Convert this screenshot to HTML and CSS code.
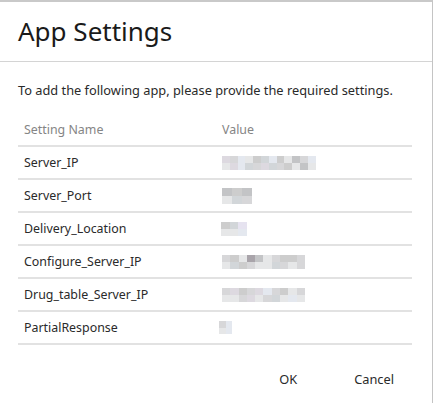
FILE: index.html
```html
<!DOCTYPE html>
<html>
<head>
<meta charset="utf-8">
<link rel="stylesheet" href="styles.css">
</head>
<body>
<div class="dialog">
  <div class="header"><h1 class="title">App Settings</h1></div>
  <div class="content">
    <p class="desc">To add the following app, please provide the required settings.</p>
    <div class="table">
      <div class="row head"><div class="name">Setting Name</div><div class="value">Value</div></div>
      <div class="row"><div class="name">Server_IP</div><div class="value">
        <div class="blur w12">
          <i class="a"></i><i class="d"></i><i class="b"></i><i class="e"></i><i class="c"></i><i class="f"></i><i class="b"></i><i class="c"></i><i class="e"></i><i class="g"></i><i class="d"></i><i class="b"></i>
          <i class="e"></i><i class="a"></i><i class="b"></i><i class="f"></i><i class="d"></i><i class="a"></i><i class="f"></i><i class="d"></i><i class="c"></i><i class="e"></i><i class="g"></i><i class="e"></i>
        </div></div></div>
      <div class="row"><div class="name">Server_Port</div><div class="value">
        <div class="blur w3 wide">
          <i class="g"></i><i class="c"></i><i class="g"></i>
          <i class="e"></i><i class="f"></i><i class="d"></i>
        </div></div></div>
      <div class="row"><div class="name">Delivery_Location</div><div class="value">
        <div class="blur w3 mid">
          <i class="c"></i><i class="f"></i><i class="h"></i>
          <i class="e"></i><i class="e"></i><i class="b"></i>
        </div></div></div>
      <div class="row"><div class="name">Configure_Server_IP</div><div class="value">
        <div class="blur w10">
          <i class="d"></i><i class="c"></i><i class="e"></i><i class="k"></i><i class="g"></i><i class="e"></i><i class="d"></i><i class="c"></i><i class="c"></i><i class="d"></i>
          <i class="e"></i><i class="f"></i><i class="c"></i><i class="d"></i><i class="e"></i><i class="e"></i><i class="f"></i><i class="d"></i><i class="e"></i><i class="d"></i>
        </div></div></div>
      <div class="row"><div class="name">Drug_table_Server_IP</div><div class="value">
        <div class="blur w10">
          <i class="d"></i><i class="a"></i><i class="c"></i><i class="d"></i><i class="a"></i><i class="b"></i><i class="d"></i><i class="c"></i><i class="e"></i><i class="d"></i>
          <i class="e"></i><i class="e"></i><i class="d"></i><i class="a"></i><i class="e"></i><i class="d"></i><i class="f"></i><i class="e"></i><i class="b"></i><i class="e"></i>
        </div></div></div>
      <div class="row"><div class="name">PartialResponse</div><div class="value">
        <div class="blur w2 tiny">
          <i class="d"></i><i class="b"></i>
          <i class="e"></i><i class="b"></i>
        </div></div></div>
    </div>
    <div class="actions">
      <button class="btn">OK</button>
      <button class="btn">Cancel</button>
    </div>
  </div>
</div>
</body>
</html>
```
FILE: styles.css
```css
html, body {
  margin: 0;
  padding: 0;
  background: #ffffff;
}
body {
  font-family: "Noto Sans", "Open Sans", "DejaVu Sans", sans-serif;
  color: #222222;
}
.dialog {
  width: 433px;
  height: 403px;
  box-sizing: border-box;
  border-top: 2px solid #c9c9c9;
  border-right: 1px solid #c4c4c4;
  background: #ffffff;
}
.header {
  height: 59px;
  border-bottom: 1px solid #d4d4d4;
  display: flex;
  align-items: center;
  padding-left: 18px;
}
.title {
  margin: 0;
  font-size: 26px;
  font-weight: 400;
  color: #1a1a1a;
  padding-bottom: 2px;
}
.content {
  padding: 19px 20px 0 18px;
}
.desc {
  margin: 0;
  font-size: 12.8px;
  line-height: 18px;
  color: #2a2a2a;
}
.table {
  margin-top: 14px;
}
.row {
  display: flex;
  align-items: center;
  height: 33px;
  box-sizing: border-box;
  border-bottom: 2px solid #e2e2e2;
  font-size: 12.4px;
  color: #2a2a2a;
}
.row.head {
  height: 34px;
  color: #858585;
}
.name {
  width: 198px;
  padding-left: 6px;
}
.value {
  flex: 1;
  display: flex;
  align-items: center;
}
.blur {
  display: grid;
  grid-auto-rows: 7px;
}
.blur i {
  display: block;
}
.w12 { grid-template-columns: repeat(12, 7.8px); }
.w10 { grid-template-columns: repeat(10, 8.3px); }
.w3 { grid-template-columns: repeat(3, 8.6px); }
.w3.wide { grid-template-columns: repeat(3, 10px); grid-auto-rows: 8px; }
.w3.mid { margin-left: -1px; }
.w2 { grid-template-columns: repeat(2, 6.5px); }
.tiny { margin-left: -3px; grid-auto-rows: 6.5px; }
.a { background: #ddd9e0; }
.b { background: #e4e8ef; }
.c { background: #cdcdcd; }
.d { background: #d7d7d9; }
.e { background: #e6e7e8; }
.f { background: #d2d6d9; }
.g { background: #c3c4c6; }
.h { background: #e6e3f0; }
.k { background: #a9a4aa; }
.actions {
  display: flex;
  justify-content: flex-end;
  padding-top: 18px;
  gap: 21px;
}
.btn {
  font-family: inherit;
  font-size: 12.8px;
  color: #2a2a2a;
  background: transparent;
  border: none;
  height: 32px;
  padding: 0 18px;
  cursor: pointer;
}
```
